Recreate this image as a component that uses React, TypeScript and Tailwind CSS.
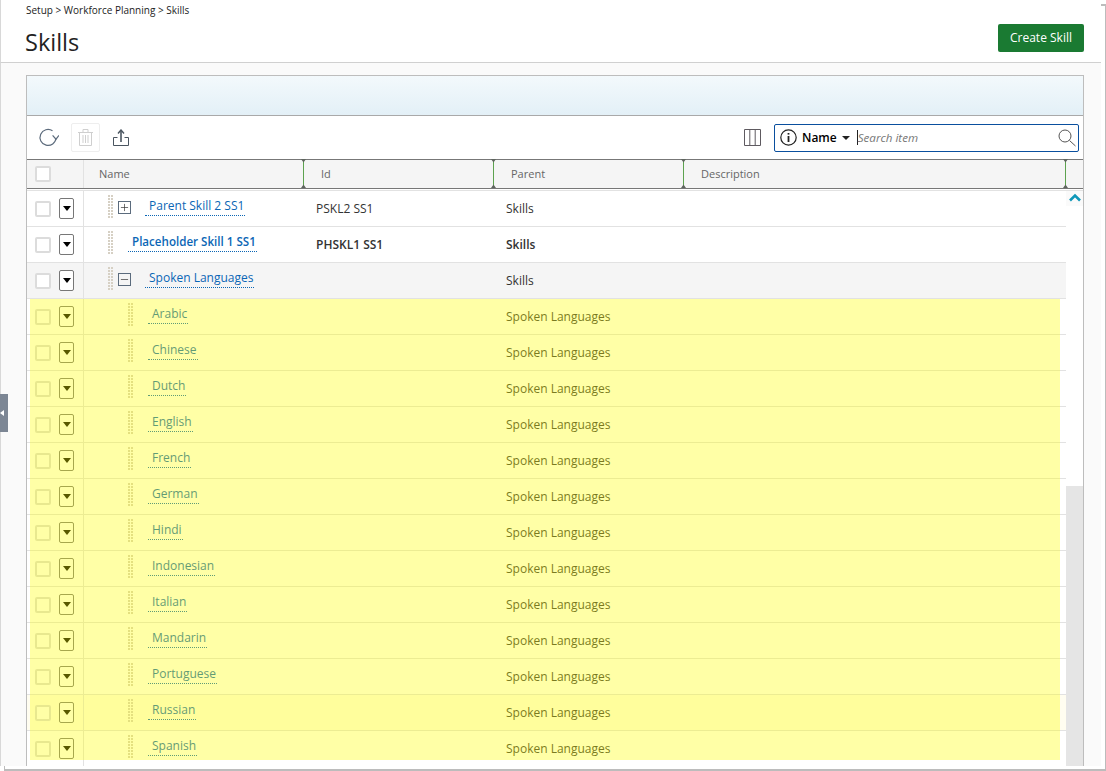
import React from 'react';
import { Plus, Minus } from 'lucide-react';

const languages = ['Arabic', 'Chinese', 'Dutch', 'English', 'French', 'German', 'Hindi', 'Indonesian', 'Italian', 'Mandarin', 'Portuguese', 'Russian', 'Spanish'];

const columns = [
  { label: 'Name', width: 'w-[219px]', pad: 'pl-[15px]' },
  { label: 'Id', width: 'w-[190px]', pad: 'pl-[18px]' },
  { label: 'Parent', width: 'w-[190px]', pad: 'pl-[18px]' },
  { label: 'Description', width: 'w-[382px]', pad: 'pl-[18px]' },
];

const Grip = () => (
  <svg width="6" height="24" viewBox="0 0 6 24" className="shrink-0 text-[#d6d0c4]">
    {Array.from({ length: 8 }).map((_, i) => (
      <g key={i} fill="currentColor">
        <rect x="0" y={i * 3} width="2" height="2" />
        <rect x="3" y={i * 3} width="2" height="2" />
      </g>
    ))}
  </svg>
);

const Check = () => <span className="block w-4 h-4 shrink-0 bg-white border-2 border-[#dcdcdc] rounded-[2px]" />;

const RowMenu = () => (
  <span className="flex items-center justify-center w-[15px] h-[21px] bg-white border border-[#777] rounded-[2px]">
    <span className="w-0 h-0 border-x-[4px] border-x-transparent border-t-[5px] border-t-black" />
  </span>
);

const ResizeHandle = () => (
  <svg width="5" height="29" viewBox="0 0 5 29" className="absolute -right-[3px] -top-px">
    <path d="M2.5 0V29" stroke="#5da24f" />
    <path d="M0 0H5L2.5 3.5ZM0 29H5L2.5 25.5Z" fill="#5f665f" />
  </svg>
);

type RowProps = {
  name: string;
  id?: string;
  parent: string;
  level?: number;
  toggle?: 'plus' | 'minus';
  bold?: boolean;
  tint?: string;
};

const Row = ({ name, id, parent, level = 0, toggle, bold, tint = 'bg-white' }: RowProps) => (
  <div className={`flex h-9 shrink-0 border-b border-[#e2e2e2] text-xs text-[#333] ${tint}`}>
    <div className="w-[57px] shrink-0 flex items-center gap-2 pl-2 border-r border-[#e2e2e2]">
      <Check />
      <RowMenu />
    </div>
    <div className={`w-[219px] shrink-0 flex items-start pt-[4px] ${level ? 'pl-[44px]' : 'pl-[24px]'}`}>
      <Grip />
      {toggle && (
        <span className="ml-[4px] mt-[6px] w-[13px] h-[13px] shrink-0 flex items-center justify-center border border-[#5b6b7d] text-[#333]">
          {toggle === 'plus' ? <Plus size={11} strokeWidth={1.5} /> : <Minus size={11} strokeWidth={1.5} />}
        </span>
      )}
      <a className={`mt-[2px] ml-[14px] pl-1 pr-px text-[#0b66b5] border-b border-dotted border-[#0b66b5] leading-[18px] ${bold ? 'font-semibold text-[11.6px]' : ''}`}>
        {name}
      </a>
    </div>
    <div className={`w-[190px] shrink-0 flex items-center pl-[13px] ${bold ? 'font-semibold' : ''}`}>{id}</div>
    <div className={`flex-1 flex items-center pl-[13px] ${bold ? 'font-semibold' : ''}`}>{parent}</div>
  </div>
);

export default function App() {
  return (
    <div className="relative w-[1106px] h-[771px] overflow-hidden bg-white font-['Open_Sans',sans-serif] flex flex-col">
      {/* Page header */}
      <div className="h-[63px] shrink-0 bg-white border-b border-[#d0d0d0] border-l border-l-[#d8d8d8] mr-[5px] pl-[25px] pr-[17px] flex justify-between">
        <div>
          <div className="text-[10px] leading-[14px] pt-[3px] text-[#222]">Setup &gt; Workforce Planning &gt; Skills</div>
          <h1 className="text-[23.5px] leading-[32px] mt-[9px] -ml-px text-[#222]">Skills</h1>
        </div>
        <button className="mt-[24px] w-[86px] h-[28px] bg-[#1a7a32] rounded-[2px] text-white text-xs">Create Skill</button>
      </div>

      {/* Main area */}
      <div className="h-[703px] shrink-0 mr-[5px] bg-[#fafafa] pt-3 pl-[26px] border-l border-l-[#d8d8d8]">
        <div className="relative h-[691px] w-[1058px] -ml-px bg-white border border-[#bdbdbd] border-b-0 flex flex-col overflow-hidden">
          <div className="h-[40px] shrink-0 bg-gradient-to-b from-[#f3f9fc] to-[#e3f0f7] border-b border-[#a9a9a9]" />

          {/* Toolbar */}
          <div className="h-[44px] shrink-0 flex items-center border-b border-[#777] pl-[11px] pr-[4px]">
            <svg width="21" height="19" viewBox="0 0 21 19" fill="none" stroke="#5c6b7c" strokeWidth="1.2">
              <path d="M14.5 2.8A8 8 0 1 0 18 10" />
              <path d="M14.6 7.4L18 11.2L21 7.4" />
            </svg>
            <span className="ml-[12px] w-[29px] h-[29px] flex items-center justify-center border border-[#eeeeee] rounded-[2px]">
              <svg width="15" height="17" viewBox="0 0 15 17" fill="none" stroke="#cfcfcf">
                <path d="M0 3.5H15M5 3.5V.5H10V3.5M1.5 3.5H13.5V16.5H1.5ZM5 6V14M7.5 6V14M10 6V14" />
              </svg>
            </span>
            <svg width="16" height="17" viewBox="0 0 16 17" className="ml-[13px]" fill="none" stroke="#4a5560">
              <path d="M4.5 8.5H.5V16.5H15.5V8.5H11.5" />
              <path d="M8 13V2" strokeWidth="1.6" />
              <path d="M5 4.5L8 1L11 4.5" strokeWidth="1.4" />
            </svg>
            <div className="flex-1" />
            <svg width="17" height="17" viewBox="0 0 17 17" fill="none" stroke="#5e5a60">
              <path d="M.5 .5H16.5V16.5H.5ZM5.8 .5V16.5M11.2 .5V16.5" />
            </svg>
            <div className="ml-[13px] w-[305px] h-[28px] flex items-center border border-[#0a4f9e] rounded-[2px] pl-[5px] pr-[2px]">
              <svg width="17" height="17" viewBox="0 0 17 17" fill="none" stroke="#222" strokeWidth="1.2">
                <circle cx="8.5" cy="8.5" r="7.7" />
                <path d="M8.5 7V13" strokeWidth="1.8" />
                <path d="M8.5 4V5.6" strokeWidth="1.8" />
              </svg>
              <span className="ml-[5px] text-xs font-semibold text-black">Name</span>
              <span className="ml-[5px] w-0 h-0 border-x-[4px] border-x-transparent border-t-[4px] border-t-[#222]" />
              <span className="ml-[7px] w-px h-[15px] bg-[#222]" />
              <span className="flex-1 text-[11.6px] italic text-[#777]">Search item</span>
              <svg width="18" height="18" viewBox="0 0 18 18" fill="none" stroke="#555">
                <circle cx="7" cy="7" r="6" />
                <path d="M11.5 11.5L17.5 17" />
              </svg>
            </div>
          </div>

          {/* Column headers */}
          <div className="h-[29px] shrink-0 flex bg-[#f5f5f5] border-b border-[#777] text-[11px] text-[#666]">
            <div className="w-[57px] shrink-0 flex items-center pl-2 border-r border-[#e2e2e2]">
              <Check />
            </div>
            {columns.map((col) => (
              <div key={col.label} className={`relative ${col.width} shrink-0 flex items-center ${col.pad}`}>
                {col.label}
                <ResizeHandle />
              </div>
            ))}
          </div>

          {/* Rows and scrollbar */}
          <div className="flex-1 min-h-0 flex mt-px border-t border-[#e2e2e2] overflow-hidden">
            <div className="w-[1039px] shrink-0 flex flex-col">
              <Row name="Parent Skill 2 SS1" id="PSKL2 SS1" parent="Skills" toggle="plus" />
              <Row name="Placeholder Skill 1 SS1" id="PHSKL1 SS1" parent="Skills" bold />
              <Row name="Spoken Languages" parent="Skills" toggle="minus" tint="bg-[#f5f5f5]" />
              {languages.map((lang) => (
                <Row key={lang} name={lang} parent="Spoken Languages" level={1} tint={lang === 'Russian' ? 'bg-[#fffdf0]' : 'bg-white'} />
              ))}
            </div>
            <div className="flex-1 flex flex-col">
              <div className="h-[295px] shrink-0">
                <div className="h-[15px] flex justify-center pt-[2px] bg-[#fafafa]">
                  <svg width="12" height="9" viewBox="0 0 12 9" fill="none" stroke="#0f97b8" strokeWidth="2.6">
                    <path d="M1 7.5L6 2.5L11 7.5" />
                  </svg>
                </div>
              </div>
              <div className="flex-1 bg-[#e5e5e5]" />
            </div>
          </div>
        </div>
      </div>

      {/* Drawer handle */}
      <div className="absolute left-0 top-[394px] w-2 h-[38px] bg-[#7c8694] flex items-center">
        <span className="w-0 h-0 border-y-[3px] border-y-transparent border-r-[4px] border-r-white" />
      </div>

      {/* Yellow highlight over the child rows */}
      <div className="absolute left-[30px] top-[299px] w-[1030px] h-[461px] bg-[#ffff00]/35" />

      {/* Frame corners */}
      <div className="absolute left-[4px] top-[766px] right-0 bottom-0 border-l border-b-2 border-[#bcbcbc]" />
      <div className="absolute right-0 top-[4px] w-[5px] bottom-0 border-t-2 border-r border-[#bcbcbc]" />
    </div>
  );
}
